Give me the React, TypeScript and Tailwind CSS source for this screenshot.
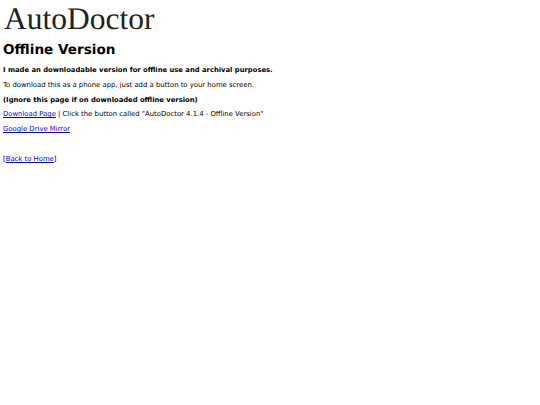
export default function App() {
  return (
    <div className="min-h-[405px] bg-white px-[3px] text-[6.86px] leading-[8px] text-black font-['DejaVu_Sans',sans-serif] [text-rendering:geometricPrecision]">
      <div className="h-[37px] pl-px font-['Liberation_Serif',serif] text-[31.5px] leading-[38px] text-[#222]">AutoDoctor</div>
      <h1 className="mt-[3.5px] text-[13.6px] leading-[18px] font-bold">Offline Version</h1>
      <p className="mt-[7.5px] text-[6.8px] font-bold">I made an downloadable version for offline use and archival purposes.</p>
      <p className="mt-[6.8px]">To download this as a phone app, just add a button to your home screen.</p>
      <p className="mt-[6.8px] text-[6.8px] font-bold">(Ignore this page if on downloaded offline version)</p>
      <p className="mt-[6.8px]"><a href="#" className="text-[#00e] underline">Download Page</a> | Click the button called "AutoDoctor 4.1.4 - Offline Version"</p>
      <p className="mt-[6.8px]"><a href="#" className="text-[#00e] underline">Google Drive Mirror</a></p>
      <p className="mt-[21.5px]">[<a href="#" className="text-[#00e] underline">Back to Home</a>]</p>
    </div>
  );
}
